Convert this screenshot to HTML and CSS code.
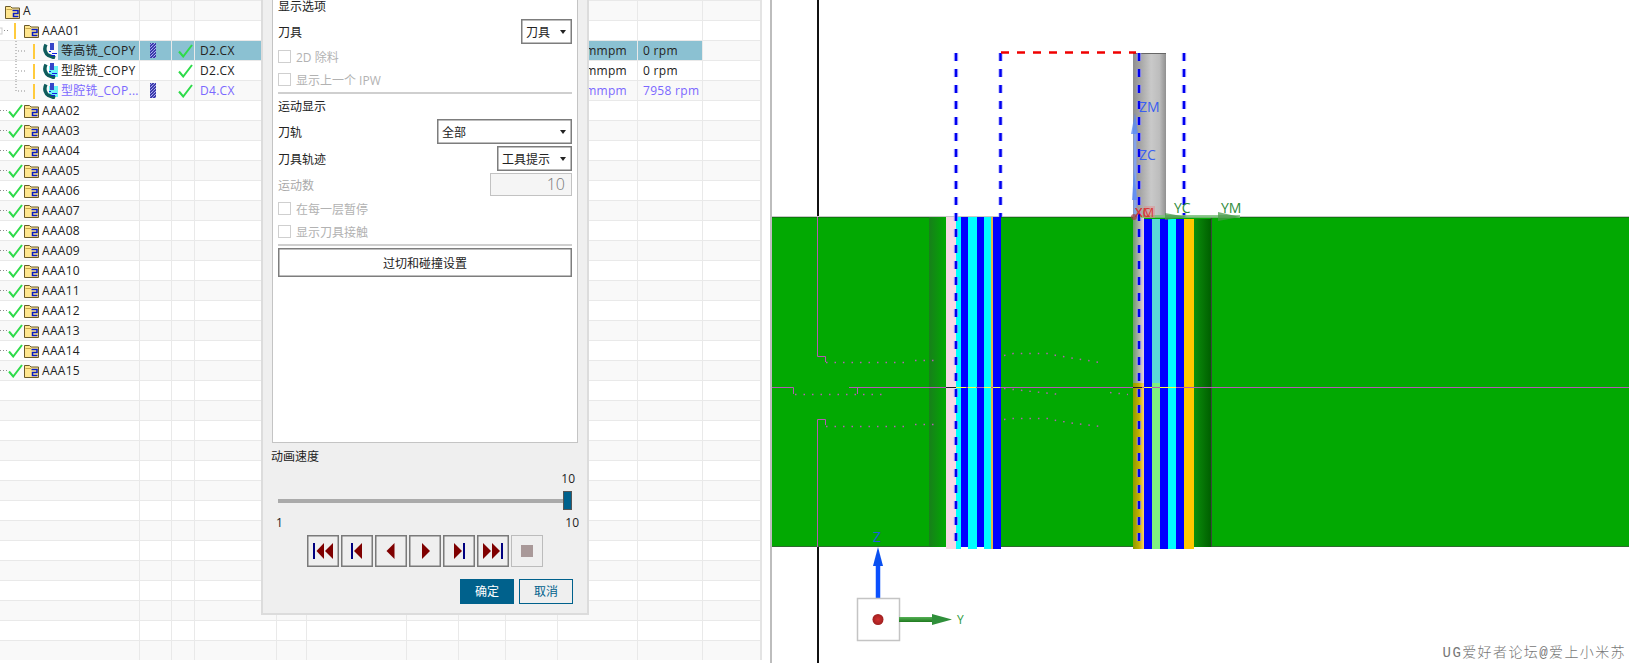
FILE: index.html
```html
<!DOCTYPE html>
<html lang="zh-CN">
<head>
<meta charset="utf-8">
<title>刀轨可视化</title>
<link rel="stylesheet" href="styles.css">
</head>
<body>
<svg class="sprite" aria-hidden="true">
  <defs>
    <pattern id="dither" width="3" height="3" patternUnits="userSpaceOnUse">
      <rect width="3" height="3" fill="#3c3caa"/>
      <rect x="1" y="0" width="1" height="1" fill="#b4b4f4"/>
      <rect x="0" y="1" width="1" height="1" fill="#8c8ce4"/>
      <rect x="2" y="2" width="1" height="1" fill="#a4a4ee"/>
    </pattern>
    <symbol id="folder" viewBox="0 0 15 14">
      <path d="M.5 13.5V1.5H5.500L7 3H14.500V13.500Z" fill="#ffe68f" stroke="#6b5a2a"/>
      <path d="M1.500 4.500H7" stroke="#c9a94e" fill="none"/>
      <path d="M7.500 5.500H13V8.500H8.500V11.500H13.500" fill="none" stroke="#0a1cc4" stroke-width="1.500"/>
    </symbol>
    <symbol id="check" viewBox="0 0 15 14">
      <path d="M1 7.500L5.200 12.500L14 1" fill="none" stroke="#2edb4a" stroke-width="2"/>
    </symbol>
    <symbol id="op" viewBox="0 0 15 16">
      <path d="M3 1.500C.5 6 2.500 10.500 5.500 12.500L12 15" fill="none" stroke="#0f5c5c" stroke-width="3.500"/>
      <rect x="7" y="0" width="4" height="7" fill="#3646c8"/>
      <path d="M6 8.500H8M9 10.500H14M8 12.500H12" stroke="#1020e0" fill="none"/>
    </symbol>
    <symbol id="op-cyan" viewBox="0 0 15 16">
      <rect x="6" y="3" width="9" height="11" fill="#6cf4f4"/>
      <path d="M3 1.500C.5 6 2.500 10.500 5.500 12.500L12 15" fill="none" stroke="#0f5c5c" stroke-width="3.500"/>
      <rect x="7" y="0" width="4" height="7" fill="#3646c8"/>
      <path d="M6 8.500H8M9 10.500H14M8 12.500H12" stroke="#1020e0" fill="none"/>
    </symbol>
    <symbol id="group-row" viewBox="0 0 42 19">
      <path d="M0 9.500H8" class="dots"/>
      <use href="#check" x="8" y="3" width="15" height="14"/>
      <use href="#folder" x="24" y="3" width="15" height="14"/>
    </symbol>
  </defs>
</svg>

<div class="app">
  <section class="tree-panel">
    <table class="grid">
      <colgroup>
        <col class="c1"><col class="c2"><col class="c3"><col class="c4"><col class="c5"><col class="c6">
        <col class="c7"><col class="c8"><col class="c9"><col class="c10"><col class="c11"><col class="c12">
      </colgroup>
      <tbody>
        <tr><td><div class="tree"><svg class="g g23"><use href="#folder" x="5" y="4" width="15" height="14"/></svg><span>A</span></div></td><td></td><td></td><td></td><td></td><td></td><td></td><td></td><td></td><td></td><td></td><td></td></tr>
        <tr><td><div class="tree"><svg class="g g42"><rect class="box" x="-2" y="7" width="4" height="6"/><path class="dots" d="M4 9.500H8"/><rect class="flag" x="14" y="2" width="2" height="16"/><use href="#folder" x="24" y="3" width="15" height="14"/></svg><span>AAA01</span></div></td><td></td><td></td><td></td><td></td><td></td><td></td><td></td><td></td><td></td><td></td><td></td></tr>
        <tr class="sel"><td><div class="tree"><svg class="g g58"><path class="dots" d="M16 0V19M18 10H25"/><rect class="flag" x="33" y="3" width="2" height="15"/><use href="#op" x="43" y="2" width="15" height="16"/></svg><span class="name">等高铣_COPY</span></div></td><td class="ico"><svg class="bar"><rect width="6" height="15" fill="url(#dither)"/></svg></td><td class="ico"><svg class="tick"><use href="#check" width="15" height="14"/></svg></td><td>D2.CX</td><td></td><td></td><td></td><td></td><td></td><td class="right">mmpm</td><td>0 rpm</td><td class="plain"></td></tr>
        <tr><td><div class="tree"><svg class="g g58"><path class="dots" d="M16 0V19M18 10H25"/><rect class="flag" x="33" y="3" width="2" height="15"/><use href="#op-cyan" x="43" y="2" width="15" height="16"/></svg><span class="name">型腔铣_COPY</span></div></td><td></td><td class="ico"><svg class="tick"><use href="#check" width="15" height="14"/></svg></td><td>D2.CX</td><td></td><td></td><td></td><td></td><td></td><td class="right">mmpm</td><td>0 rpm</td><td></td></tr>
        <tr class="alt"><td><div class="tree"><svg class="g g58"><path class="dots" d="M16 0V10M18 10H25"/><rect class="flag" x="33" y="3" width="2" height="15"/><use href="#op-cyan" x="43" y="2" width="15" height="16"/></svg><span class="name">型腔铣_COP...</span></div></td><td class="ico"><svg class="bar"><rect width="6" height="15" fill="url(#dither)"/></svg></td><td class="ico"><svg class="tick"><use href="#check" width="15" height="14"/></svg></td><td>D4.CX</td><td></td><td></td><td></td><td></td><td></td><td class="right">mmpm</td><td>7958 rpm</td><td></td></tr>
        <tr><td><div class="tree"><svg class="g g42"><use href="#group-row"/></svg><span>AAA02</span></div></td><td></td><td></td><td></td><td></td><td></td><td></td><td></td><td></td><td></td><td></td><td></td></tr>
        <tr><td><div class="tree"><svg class="g g42"><use href="#group-row"/></svg><span>AAA03</span></div></td><td></td><td></td><td></td><td></td><td></td><td></td><td></td><td></td><td></td><td></td><td></td></tr>
        <tr><td><div class="tree"><svg class="g g42"><use href="#group-row"/></svg><span>AAA04</span></div></td><td></td><td></td><td></td><td></td><td></td><td></td><td></td><td></td><td></td><td></td><td></td></tr>
        <tr><td><div class="tree"><svg class="g g42"><use href="#group-row"/></svg><span>AAA05</span></div></td><td></td><td></td><td></td><td></td><td></td><td></td><td></td><td></td><td></td><td></td><td></td></tr>
        <tr><td><div class="tree"><svg class="g g42"><use href="#group-row"/></svg><span>AAA06</span></div></td><td></td><td></td><td></td><td></td><td></td><td></td><td></td><td></td><td></td><td></td><td></td></tr>
        <tr><td><div class="tree"><svg class="g g42"><use href="#group-row"/></svg><span>AAA07</span></div></td><td></td><td></td><td></td><td></td><td></td><td></td><td></td><td></td><td></td><td></td><td></td></tr>
        <tr><td><div class="tree"><svg class="g g42"><use href="#group-row"/></svg><span>AAA08</span></div></td><td></td><td></td><td></td><td></td><td></td><td></td><td></td><td></td><td></td><td></td><td></td></tr>
        <tr><td><div class="tree"><svg class="g g42"><use href="#group-row"/></svg><span>AAA09</span></div></td><td></td><td></td><td></td><td></td><td></td><td></td><td></td><td></td><td></td><td></td><td></td></tr>
        <tr><td><div class="tree"><svg class="g g42"><use href="#group-row"/></svg><span>AAA10</span></div></td><td></td><td></td><td></td><td></td><td></td><td></td><td></td><td></td><td></td><td></td><td></td></tr>
        <tr><td><div class="tree"><svg class="g g42"><use href="#group-row"/></svg><span>AAA11</span></div></td><td></td><td></td><td></td><td></td><td></td><td></td><td></td><td></td><td></td><td></td><td></td></tr>
        <tr><td><div class="tree"><svg class="g g42"><use href="#group-row"/></svg><span>AAA12</span></div></td><td></td><td></td><td></td><td></td><td></td><td></td><td></td><td></td><td></td><td></td><td></td></tr>
        <tr><td><div class="tree"><svg class="g g42"><use href="#group-row"/></svg><span>AAA13</span></div></td><td></td><td></td><td></td><td></td><td></td><td></td><td></td><td></td><td></td><td></td><td></td></tr>
        <tr><td><div class="tree"><svg class="g g42"><use href="#group-row"/></svg><span>AAA14</span></div></td><td></td><td></td><td></td><td></td><td></td><td></td><td></td><td></td><td></td><td></td><td></td></tr>
        <tr><td><div class="tree"><svg class="g g42"><use href="#group-row"/></svg><span>AAA15</span></div></td><td></td><td></td><td></td><td></td><td></td><td></td><td></td><td></td><td></td><td></td><td></td></tr>
        <tr><td></td><td></td><td></td><td></td><td></td><td></td><td></td><td></td><td></td><td></td><td></td><td></td></tr>
        <tr><td></td><td></td><td></td><td></td><td></td><td></td><td></td><td></td><td></td><td></td><td></td><td></td></tr>
        <tr><td></td><td></td><td></td><td></td><td></td><td></td><td></td><td></td><td></td><td></td><td></td><td></td></tr>
        <tr><td></td><td></td><td></td><td></td><td></td><td></td><td></td><td></td><td></td><td></td><td></td><td></td></tr>
        <tr><td></td><td></td><td></td><td></td><td></td><td></td><td></td><td></td><td></td><td></td><td></td><td></td></tr>
        <tr><td></td><td></td><td></td><td></td><td></td><td></td><td></td><td></td><td></td><td></td><td></td><td></td></tr>
        <tr><td></td><td></td><td></td><td></td><td></td><td></td><td></td><td></td><td></td><td></td><td></td><td></td></tr>
        <tr><td></td><td></td><td></td><td></td><td></td><td></td><td></td><td></td><td></td><td></td><td></td><td></td></tr>
        <tr><td></td><td></td><td></td><td></td><td></td><td></td><td></td><td></td><td></td><td></td><td></td><td></td></tr>
        <tr><td></td><td></td><td></td><td></td><td></td><td></td><td></td><td></td><td></td><td></td><td></td><td></td></tr>
        <tr><td></td><td></td><td></td><td></td><td></td><td></td><td></td><td></td><td></td><td></td><td></td><td></td></tr>
        <tr><td></td><td></td><td></td><td></td><td></td><td></td><td></td><td></td><td></td><td></td><td></td><td></td></tr>
        <tr><td></td><td></td><td></td><td></td><td></td><td></td><td></td><td></td><td></td><td></td><td></td><td></td></tr>
        <tr><td></td><td></td><td></td><td></td><td></td><td></td><td></td><td></td><td></td><td></td><td></td><td></td></tr>
      </tbody>
    </table>

    <div class="dialog">
      <div class="options">
        <div class="title">显示选项</div>
        <div class="row mt7"><span>刀具</span><span class="select w51">刀具<i class="caret"></i></span></div>
        <label class="check mt6"><i class="box13"></i>2D 除料</label>
        <label class="check mt10"><i class="box13"></i>显示上一个 IPW</label>
        <hr class="sep">
        <div class="title mt6">运动显示</div>
        <div class="row mt7"><span>刀轨</span><span class="select w135">全部<i class="caret"></i></span></div>
        <div class="row mt2"><span>刀具轨迹</span><span class="select w75">工具提示<i class="caret"></i></span></div>
        <div class="row mt2 h23 muted"><span>运动数</span><span class="count">10</span></div>
        <label class="check mt6"><i class="box13"></i>在每一层暂停</label>
        <label class="check mt10"><i class="box13"></i>显示刀具接触</label>
        <hr class="sep">
        <button class="wide" type="button">过切和碰撞设置</button>
      </div>

      <div class="speed-title">动画速度</div>
      <div class="speed-value">10</div>
      <div class="slider"><span class="track"></span><span class="thumb"></span></div>
      <div class="ticks"><span>1</span><span>10</span></div>

      <div class="player">
        <button class="pbtn" type="button"><svg viewBox="-12 -12 24 24"><rect class="nv" x="-10" y="-8" width="2" height="16"/><path class="mr" d="M-6.500 0L1-8V8ZM2 0L10-8V8Z"/></svg></button>
        <button class="pbtn" type="button"><svg viewBox="-12 -12 24 24"><rect class="nv" x="-6" y="-8" width="2" height="16"/><path class="mr" d="M-3 0L5-8V8Z"/></svg></button>
        <button class="pbtn" type="button"><svg viewBox="-12 -12 24 24"><path class="mr" d="M-4.500 0L3.500-8V8Z"/></svg></button>
        <button class="pbtn" type="button"><svg viewBox="-12 -12 24 24"><path class="mr" d="M-3-8L5 0L-3 8Z"/></svg></button>
        <button class="pbtn" type="button"><svg viewBox="-12 -12 24 24"><path class="mr" d="M-5-8L3 0L-5 8Z"/><rect class="nv" x="4" y="-8" width="2" height="16"/></svg></button>
        <button class="pbtn" type="button"><svg viewBox="-12 -12 24 24"><path class="mr" d="M-10-8L-2 0L-10 8ZM-1-8L7 0L-1 8Z"/><rect class="nv" x="8" y="-8" width="2" height="16"/></svg></button>
        <button class="pbtn off" type="button"><svg viewBox="-12 -12 24 24"><rect class="stop" x="-6" y="-6" width="12" height="12"/></svg></button>
      </div>

      <div class="actions">
        <button class="ok" type="button">确定</button>
        <button class="cancel" type="button">取消</button>
      </div>
    </div>
  </section>

  <main class="view">
    <svg class="scene" viewBox="772 0 857 663" width="857" height="663">
      <defs>
        <linearGradient id="gLeft"><stop offset="0" stop-color="#17801a"/><stop offset="1" stop-color="#02a902"/></linearGradient>
        <linearGradient id="gRight"><stop offset="0" stop-color="#0b8f0b"/><stop offset="1" stop-color="#005f00"/></linearGradient>
        <linearGradient id="gTool"><stop offset="0" stop-color="#8e8e8e"/><stop offset=".55" stop-color="#c9c9c9"/><stop offset=".8" stop-color="#bdbdbd"/><stop offset="1" stop-color="#909090"/></linearGradient>
        <linearGradient id="gStem"><stop offset="0" stop-color="#6f9a6f"/><stop offset=".6" stop-color="#b6b6b0"/><stop offset="1" stop-color="#e6d6de"/></linearGradient>
        <linearGradient id="gOlive"><stop offset="0" stop-color="#8f9a00"/><stop offset=".55" stop-color="#c4b000"/><stop offset="1" stop-color="#ffd56a"/></linearGradient>
        <radialGradient id="gBall"><stop offset="0" stop-color="#d23030"/><stop offset="1" stop-color="#a02020"/></radialGradient>
        <linearGradient id="gShaftG" x1="0" y1="0" x2="0" y2="1"><stop offset="0" stop-color="#55b055"/><stop offset="1" stop-color="#1f7a1f"/></linearGradient>
      </defs>

      <rect class="crisp" x="817" y="0" width="2" height="663" fill="#111"/>
      <rect class="crisp" x="772" y="216" width="857" height="1" fill="#c8c8c8"/>
      <rect class="crisp" x="772" y="217" width="857" height="330" fill="#02a902"/>
      <rect class="crisp" x="772" y="217" width="857" height="1" fill="#0c7c0c"/>
      <rect class="crisp" x="772" y="546" width="857" height="1" fill="#2f6a2f"/>

      <g class="crisp">
        <rect x="929" y="217" width="17" height="330" fill="url(#gLeft)"/>
        <rect x="946" y="217" width="10" height="332" fill="#f8d8e4"/>
        <rect x="956" y="217" width="5" height="332" fill="#00ffff"/>
        <rect x="961" y="217" width="7" height="330" fill="#0000ff"/>
        <rect x="968" y="217" width="9" height="332" fill="#00ffff"/>
        <rect x="977" y="217" width="7" height="330" fill="#0000ff"/>
        <rect x="984" y="217" width="7" height="332" fill="#00ffff"/>
        <rect x="991" y="217" width="2" height="332" fill="#e0b84a"/>
        <rect x="993" y="217" width="8" height="332" fill="#0000ff"/>

        <rect x="1133" y="53" width="33" height="164" fill="url(#gTool)"/>
        <rect x="1133" y="53" width="33" height="1" fill="#666"/>
        <rect x="1133" y="217" width="11" height="166" fill="url(#gStem)"/>
        <rect x="1133" y="383" width="11" height="166" fill="url(#gOlive)"/>
        <rect x="1144" y="219" width="8" height="330" fill="#0000ff"/>
        <rect x="1152" y="219" width="8" height="164" fill="#5bd8d8"/>
        <rect x="1152" y="383" width="8" height="166" fill="#80f080"/>
        <rect x="1160" y="219" width="8" height="330" fill="#0000ff"/>
        <rect x="1168" y="219" width="8" height="330" fill="#00ffff"/>
        <rect x="1176" y="219" width="8" height="330" fill="#0000ff"/>
        <rect x="1184" y="219" width="10" height="330" fill="#ffc800"/>
        <rect x="1194" y="219" width="17" height="328" fill="url(#gRight)"/>
        <rect x="1211" y="217" width="1" height="330" fill="#3a4a3a"/>
      </g>

      <!-- cross-section outline -->
      <path class="section" d="M849 387.500H1629"/>
      <path class="section" d="M817.500 217V356.500H825.500V362M817.500 547V419.500H825.500V425M772 387.500H793.500V394M857.500 387.500V394"/>
      <path class="speck" d="M826 362.500H904M915 360.500H936M1004 355.500L1013 353.500H1049L1056 355.500L1075 358.500L1100 362.500"/>
      <path class="speck" d="M826 426.500H904M915 424.500H936M1004 419.500L1013 418.500H1049L1056 420.500L1075 423.500L1100 426.500"/>
      <path class="speck" d="M795 394.500H882M1004 388.500L1060 394.500M1110 392.500L1128 394.500"/>
      <path class="band-mark" d="M946 387.500H956"/>
      <path class="band-hot" d="M956 387.500H966M968 387.500H976M984 387.500H991M993 387.500H1000"/>
      <path class="band-mark" d="M1133 387.500H1142"/>
      <path class="band-hot" d="M1144 387.500H1152M1168 387.500H1176M1160 387.500H1168"/>

      <!-- tool path -->
      <g class="halo">
        <path d="M956 53V549M1000.500 53V217M1139 53V549M1184 53V217"/>
      </g>
      <g class="dash">
        <path d="M956 53V549M1000.500 53V217M1139 53V549M1184 53V217"/>
      </g>
      <path class="dash-red" d="M1001 52.500H1136"/>

      <!-- work coordinate systems -->
      <g class="wcs-z">
        <path d="M1135 217V130"/>
        <polygon points="1135,113 1131,134 1138,134"/>
        <polygon points="1134,170 1132,200 1137,200"/>
      </g>
      <path class="wcs-y" d="M1140 216.500H1240"/>
      <polygon class="wcs-yh" points="1218,212 1240,217 1218,221"/>
      <polygon class="wcs-yh" points="1165,213 1187,217 1165,220"/>
      <text class="lbl blue" x="1139" y="112">ZM</text>
      <text class="lbl blue" x="1139" y="160">ZC</text>
      <text class="lbl green" x="1174" y="213">YC</text>
      <text class="lbl green" x="1221" y="213">YM</text>
      <rect class="pink" x="1144" y="206" width="11" height="12"/>
      <text class="lbl red small" x="1135" y="217">XM</text>
      <text class="lbl red small" x="1135" y="217">XC</text>
      <circle cx="1134" cy="217" r="3" fill="#a04040" opacity=".7"/>

      <!-- triad -->
      <path class="z-shaft" d="M878 598V562"/>
      <polygon class="z-head" points="878,547 873,566 883,566"/>
      <text class="lbl triad-z" x="873" y="542">Z</text>
      <rect class="cube" x="857.500" y="598.500" width="42" height="42"/>
      <circle cx="878" cy="619.500" r="5.500" fill="url(#gBall)"/>
      <rect x="899" y="617" width="34" height="5" fill="url(#gShaftG)"/>
      <polygon class="y-head" points="932,614 952,619.500 932,625"/>
      <text class="lbl triad-y" x="957" y="624">Y</text>

      <text class="mark" x="1626" y="657">UG爱好者论坛@爱上小米苏</text>
    </svg>
  </main>
</div>
</body>
</html>
```

FILE: styles.css
```css
* { box-sizing: border-box; }

html, body {
  margin: 0;
  height: 100%;
  overflow: hidden;
  background: #fff;
}

body {
  font-family: "Open Sans", "Noto Sans CJK SC", sans-serif;
  font-size: 12px;
  color: #222;
}

.sprite { position: absolute; width: 0; height: 0; }

.app { display: flex; width: 1629px; height: 663px; }

/* left tree table */
.tree-panel {
  position: relative;
  flex: 0 0 772px;
  height: 663px;
  overflow: hidden;
  border-right: 2px solid #bdbdbd;
  background: #fff;
}

.grid {
  width: 760px;
  table-layout: fixed;
  border-collapse: separate;
  border-spacing: 0;
  border-right: 2px solid #e4e4e4;
  box-sizing: content-box;
  letter-spacing: .3px;
}

.c1 { width: 140px; } .c2 { width: 32px; } .c3 { width: 23px; } .c4 { width: 82px; }
.c5 { width: 30px; } .c6 { width: 100px; } .c7 { width: 52px; } .c8 { width: 47px; }
.c9 { width: 52px; } .c10 { width: 80px; } .c11 { width: 65px; } .c12 { width: 57px; }

.grid tr:nth-child(odd) td { background: #f9f9f9; }

.grid td {
  height: 20px;
  padding: 0 0 0 5px;
  border-top: 1px solid #e9e9e9;
  border-right: 1px solid #e9e9e9;
  line-height: 18px;
  white-space: nowrap;
  overflow: hidden;
}
.grid td:first-child { padding: 0; }
.grid td:last-child { border-right: 0; }
.grid td.right { text-align: right; padding: 0 10px 0 0; }
.grid td.ico { padding: 0; vertical-align: top; }

.grid tr.sel td { background: #8bc1d2; }
.grid tr.sel td:first-child,
.grid tr.sel td.plain { background: #f9f9f9; }
.grid tr.sel .name { background: #8bc1d2; flex: 1; align-self: stretch; padding-left: 3px; }
.grid tr.alt td { color: #7b68ff; }

.tree { display: flex; align-items: center; height: 19px; }
.g { flex: none; height: 19px; overflow: visible; }
.g23 { width: 23px; }
.g42 { width: 42px; }
.g58 { width: 58px; }
.name { padding-left: 3px; line-height: 19px; }

.bar { display: block; width: 6px; height: 15px; margin: 2px 0 0 10px; }
.tick { display: block; width: 15px; height: 14px; margin: 3px 0 0 6px; }

.dots { fill: none; stroke: #8f8f8f; stroke-width: 1; stroke-dasharray: 1 2; }
.box { fill: #fff; stroke: #cfcfcf; }
.flag { fill: #ffcb3d; }

/* dialog over the table */
.dialog {
  position: absolute;
  left: 261px;
  top: 0;
  width: 328px;
  height: 615px;
  padding: 0 9px;
  background: #efefef;
  border: 2px solid #dcdcdc;
  border-top: 0;
}

.options {
  height: 443px;
  padding: 0 5px;
  background: #fff;
  border: 1px solid #c4c4c4;
  border-top: 0;
}

.title { height: 13px; padding-top: 1px; line-height: 12px; }
.mt2 { margin-top: 2px; }
.mt6 { margin-top: 6px; }
.mt7 { margin-top: 7px; }
.mt10 { margin-top: 10px; }

.row { display: flex; justify-content: space-between; align-items: center; }
.h23 { height: 23px; }
.muted { color: #aaa; }

.title + .row { margin-top: 6px; }

.select {
  display: flex;
  align-items: center;
  justify-content: space-between;
  height: 25px;
  padding: 0 5px 0 4px;
  background: #fff;
  border: 1px solid #7d7d7d;
  box-shadow: inset 0 0 0 .5px #7d7d7d;
}
.w51 { width: 51px; }
.w135 { width: 135px; }
.w75 { width: 75px; }

.caret {
  width: 0;
  height: 0;
  border-left: 3.500px solid transparent;
  border-right: 3.500px solid transparent;
  border-top: 4px solid #222;
}

.count {
  width: 82px;
  height: 23px;
  padding-right: 6px;
  background: #f5f5f5;
  border: 1px solid #c2c2c2;
  color: #777;
  font-size: 16px;
  font-weight: 300;
  line-height: 21px;
  text-align: right;
}

.check {
  display: flex;
  align-items: center;
  gap: 5px;
  height: 13px;
  color: #b2b2b2;
}
.box13 {
  flex: none;
  width: 13px;
  height: 13px;
  background: #fff;
  border: 1px solid #cfcfcf;
}

.sep {
  height: 2px;
  margin: 6px 0 0;
  border: 0;
  background: #cfcfcf;
}

button { font: inherit; padding: 0; cursor: default; }

.wide {
  display: block;
  width: 100%;
  height: 29px;
  margin-top: 2px;
  background: #fff;
  color: #222;
  border: 1px solid #7d7d7d;
  box-shadow: inset 0 0 0 .5px #7d7d7d;
}

.speed-title { height: 14px; margin: 7px 0 0 -1px; line-height: 14px; }

.speed-value { height: 14px; margin-top: 8px; padding-right: 3px; line-height: 14px; text-align: right; }

.slider { display: flex; align-items: center; height: 19px; margin: 5px 6px 0; }
.track { flex: 1; height: 4px; background: #aaa; }
.thumb { flex: none; width: 9px; height: 19px; background: #00618c; border: 1px solid #555; }

.ticks { display: flex; justify-content: space-between; height: 14px; margin: 6px -1px 0 0; padding-left: 4px; line-height: 14px; }

.player { display: flex; gap: 2px; margin: 5px 0 0 35px; }
.pbtn { width: 32px; height: 32px; display: flex; align-items: center; justify-content: center; background: #efefef; border: 1px solid #7a7a7a; box-shadow: inset 0 0 0 .5px #7a7a7a; }
.pbtn svg { width: 24px; height: 24px; }
.pbtn.off { border-color: #bcbcbc; box-shadow: none; }
.mr { fill: #7f0000; }
.nv { fill: #000080; }
.stop { fill: #a99999; }

.actions { display: flex; justify-content: flex-end; gap: 5px; margin-top: 12px; padding-right: 5px; }
.ok, .cancel { width: 54px; height: 25px; line-height: 21px; }
.ok { background: #00618c; color: #fff; border: 1px solid #00618c; }
.cancel { background: transparent; color: #00618c; border: 1px solid #00618c; }

/* 3D view */
.view { flex: 1; min-width: 0; background: #fff; }
.scene { display: block; }
.crisp { shape-rendering: crispEdges; }

.section { fill: none; stroke: #b45ab4; stroke-width: 1; }
.speck { fill: none; stroke: #b55fb5; stroke-width: 1.500; stroke-dasharray: 1.500 7; }
.band-mark { stroke: #222; stroke-width: 1; }
.band-hot { stroke: #ffff40; stroke-width: 1; }

.halo path { fill: none; stroke: #a8a8ff; stroke-width: 4.500; stroke-dasharray: 8 8; opacity: .7; }
.dash path { fill: none; stroke: #0000f0; stroke-width: 2.500; stroke-dasharray: 8 8; }
.dash-red { fill: none; stroke: #f00000; stroke-width: 2.500; stroke-dasharray: 8 8; }

.wcs-z path { stroke: #7fa6ff; stroke-width: 3; fill: none; opacity: .8; }
.wcs-z polygon { fill: #5c8cf5; opacity: .8; }
.wcs-y { stroke: #7cc27c; stroke-width: 3; opacity: .85; }
.wcs-yh { fill: #4a9a4a; opacity: .75; }

.lbl { font-family: "Open Sans", sans-serif; font-size: 14px; }
.small { font-size: 13px; }
.blue { fill: #3a5ff0; }
.green { fill: #2e8b3a; }
.red { fill: #d83838; }
.pink { fill: #e28a8a; opacity: .45; }
.triad-z { fill: #1a5de0; }
.triad-y { fill: #2e9a3a; font-size: 12px; }

.z-shaft { stroke: #0a50ff; stroke-width: 4.500; fill: none; }
.z-head { fill: #0a50f0; }
.cube { fill: #fff; stroke: #c4c4c4; stroke-width: 1.500; }
.y-head { fill: #2f8f3a; }

.mark {
  font-family: "Liberation Mono", "Noto Sans CJK SC", monospace;
  font-size: 14px;
  font-weight: 300;
  letter-spacing: 1.400px;
  fill: #777;
  text-anchor: end;
}
```
